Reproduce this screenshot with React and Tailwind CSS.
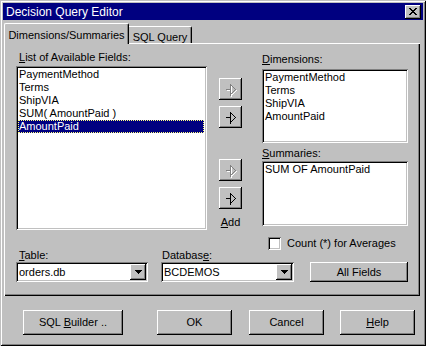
const raised =
  'bg-[#c0c0c0] shadow-[inset_-1px_-1px_0_#000,inset_1px_1px_0_#fff,inset_-2px_-2px_0_#808080]';
const sunken =
  'bg-white shadow-[inset_1px_1px_0_#808080,inset_-1px_-1px_0_#fff,inset_2px_2px_0_#000,inset_-2px_-2px_0_#c0c0c0]';

function U({ children }) {
  return <span className="underline underline-offset-[1px]">{children}</span>;
}

function ArrowGlyph({ disabled }) {
  const d = 'M5.5 10.5 H10.5 M10.5 4.5 V16.5 M10.5 5.5 L15.5 10.5 L10.5 15.5';
  return (
    <svg width="21" height="20" viewBox="0 0 21 20" shapeRendering="crispEdges">
      {disabled && <path d={d} transform="translate(1 1)" stroke="#fff" fill="none" />}
      <path d={d} stroke={disabled ? '#808080' : '#000'} fill="none" />
    </svg>
  );
}

function ArrowButton({ disabled, className = '' }) {
  return (
    <div className={`w-[23px] h-[22px] flex items-center justify-center ${raised} ${className}`}>
      <ArrowGlyph disabled={disabled} />
    </div>
  );
}

function ListBox({ items, selected, className = '' }) {
  return (
    <div className={`${sunken} p-[2px] ${className}`}>
      {items.map((item, i) => (
        <div
          key={item}
          className={`h-[13px] leading-[13px] px-[1px] whitespace-pre ${
            i === selected
              ? 'bg-[#000080] text-white outline outline-1 outline-dotted outline-[#ffff80] -outline-offset-1 mr-[1px]'
              : ''
          }`}
        >
          {item}
        </div>
      ))}
    </div>
  );
}

function Combo({ value, className = '' }) {
  return (
    <div className={`${sunken} h-[20px] p-[2px] flex items-center ${className}`}>
      <div className="flex-1 pl-[1px] leading-[16px]">{value}</div>
      <div className={`w-[16px] h-[16px] flex items-center justify-center ${raised}`}>
        <svg width="7" height="4" viewBox="0 0 7 4" shapeRendering="crispEdges">
          <path d="M0 0 H7 L3.5 4 Z" fill="#000" />
        </svg>
      </div>
    </div>
  );
}

function PushButton({ children, className = '' }) {
  return (
    <div className={`${raised} flex items-center justify-center ${className}`}>
      <span className="whitespace-pre">{children}</span>
    </div>
  );
}

export default function App() {
  return (
    <div className="w-[426px] h-[346px] bg-[#c0c0c0] p-[3px] flex flex-col text-[11px] text-black font-['Liberation_Sans',Arial,sans-serif] shadow-[inset_1px_1px_0_#c0c0c0,inset_-1px_-1px_0_#000,inset_2px_2px_0_#fff,inset_-2px_-2px_0_#808080] select-none">
      {/* Title bar */}
      <div className="h-[17px] bg-[#000080] flex items-center justify-between pl-[3px] pr-[2px]">
        <span className="text-white text-[12px] leading-none">Decision Query Editor</span>
        <div className={`w-[16px] h-[14px] flex items-center justify-center ${raised}`}>
          <svg width="8" height="7" viewBox="0 0 8 7" shapeRendering="crispEdges">
            <path d="M0 0h2v1h1v1h2V1h1V0h2v1H7v1H6v1H5v1h1v1h1v1h1v1H6V6H5V5H3v1H2v1H0V6h1V5h1V4h1V3H2V2H1V1H0z" fill="#000" />
          </svg>
        </div>
      </div>

      {/* Tabs */}
      <div className="mt-[3px] h-[20px] flex items-end pl-[1px]">
        <div className="relative z-10 h-[21px] -mb-[1px] w-[125px] bg-[#c0c0c0] border-l border-t border-white rounded-tl-[2px] rounded-tr-[2px] shadow-[inset_-1px_0_0_#808080] border-r border-r-black flex items-start justify-center pt-[3px]">
          Dimensions/Summaries
        </div>
        <div className="h-[17px] w-[63px] border-t border-white rounded-tr-[2px] shadow-[inset_-1px_0_0_#808080] border-r border-r-black flex items-start justify-center pt-[2px]">
          SQL Query
        </div>
      </div>

      {/* Tab panel */}
      <div className="ml-[1px] mr-[3px] h-[253px] shadow-[inset_1px_1px_0_#fff,inset_-1px_-1px_0_#000,inset_-2px_-2px_0_#808080] pl-[12px] pt-[8px] flex flex-col">
        <div className="flex">
          {/* Available fields */}
          <div className="w-[191px] flex flex-col">
            <div className="h-[13px] leading-[13px] pl-[3px]">
              <U>L</U>ist of Available Fields:
            </div>
            <ListBox
              className="mt-[2px] h-[164px]"
              items={['PaymentMethod', 'Terms', 'ShipVIA', 'SUM( AmountPaid )', 'AmountPaid']}
              selected={4}
            />
          </div>

          {/* Move buttons */}
          <div className="ml-[12px] w-[23px] flex flex-col">
            <ArrowButton disabled className="mt-[27px]" />
            <ArrowButton className="mt-[6px]" />
            <ArrowButton disabled className="mt-[31px]" />
            <ArrowButton className="mt-[6px]" />
            <div className="mt-[7px] h-[13px] leading-[13px] text-center whitespace-nowrap">
              <U>A</U>dd
            </div>
          </div>

          {/* Dimensions / Summaries */}
          <div className="ml-[20px] w-[146px] pt-[2px] flex flex-col">
            <div className="h-[13px] leading-[13px]">
              <U>D</U>imensions:
            </div>
            <ListBox
              className="mt-[3px] h-[74px]"
              items={['PaymentMethod', 'Terms', 'ShipVIA', 'AmountPaid']}
              selected={-1}
            />
            <div className="mt-[4px] h-[13px] leading-[13px]">
              <U>S</U>ummaries:
            </div>
            <ListBox className="mt-[1px] h-[65px]" items={['SUM OF AmountPaid']} selected={-1} />
            <div className="mt-[11px] ml-[6px] flex items-center gap-[6px]">
              <div className={`w-[13px] h-[13px] ${sunken}`} />
              <span className="leading-[13px]">Count (*) for Averages</span>
            </div>
          </div>
        </div>

        {/* Table / Database row */}
        <div className="-mt-[1px] flex items-end">
          <div className="w-[132px] flex flex-col">
            <div className="h-[13px] leading-[13px] pl-[3px]">
              <U>T</U>able:
            </div>
            <Combo value="orders.db" />
          </div>
          <div className="ml-[13px] w-[133px] flex flex-col">
            <div className="h-[13px] leading-[13px] pl-[1px]">
              Databas<U>e</U>:
            </div>
            <Combo value="BCDEMOS" />
          </div>
          <PushButton className="ml-[16px] w-[98px] h-[20px]">All Fields</PushButton>
        </div>
      </div>

      {/* Dialog buttons */}
      <div className="mt-[14px] flex pl-[20px]">
        <PushButton className="w-[100px] h-[25px]">
          {'SQL '}
          <U>B</U>
          {'uilder ..'}
        </PushButton>
        <PushButton className="ml-[34px] w-[75px] h-[25px]">OK</PushButton>
        <PushButton className="ml-[17px] w-[75px] h-[25px]">Cancel</PushButton>
        <PushButton className="ml-[16px] w-[75px] h-[25px]">
          <U>H</U>elp
        </PushButton>
      </div>
    </div>
  );
}
